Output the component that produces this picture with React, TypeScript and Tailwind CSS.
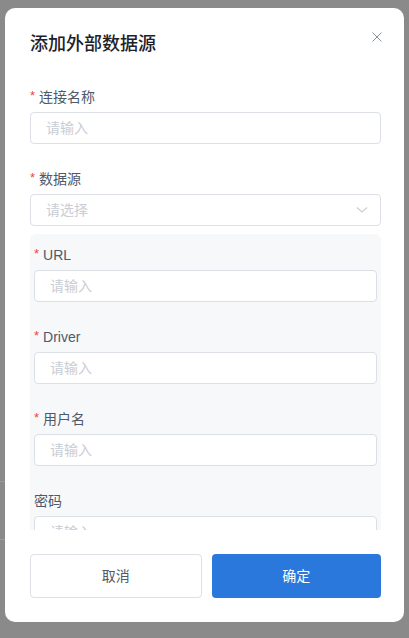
import React from "react";

const font = { fontFamily: '"Liberation Sans", "Noto Sans CJK SC", sans-serif' };

function Label({ text, required = true }: { text: string; required?: boolean }) {
  return (
    <div className="flex items-center h-[22px] mb-[4px] text-[14px] leading-[22px] text-[#4e5969]">
      {required && <span className="text-[#f53f3f] text-[13px] mr-[4px] relative top-[-1px]">*</span>}
      <span>{text}</span>
    </div>
  );
}

function Input({ placeholder = "请输入", select = false }: { placeholder?: string; select?: boolean }) {
  return (
    <div className="h-[32px] bg-white border border-[#dcdfe6] rounded-[4px] flex items-center pl-[15px] pr-[12px] justify-between">
      <span className="text-[14px] text-[#c9cdd4]">{placeholder}</span>
      {select && (
        <svg width="12" height="8" viewBox="0 0 12 8" fill="none">
          <path d="M1 1.5 L6 6 L11 1.5" stroke="#c9cdd4" strokeWidth="1.1" />
        </svg>
      )}
    </div>
  );
}

function Item({ label, required = true, select = false, last = false }: { label: string; required?: boolean; select?: boolean; last?: boolean }) {
  return (
    <div className={last ? "" : "mb-[24px]"}>
      <Label text={label} required={required} />
      <Input placeholder={select ? "请选择" : "请输入"} select={select} />
    </div>
  );
}

export default function App() {
  return (
    <div className="relative w-[409px] h-[638px] bg-[#8a8a8a] overflow-hidden" style={font}>
      <div className="absolute left-0 top-[481px] w-[6px] h-px bg-[#9a9a9a]" />
      <div className="absolute left-0 top-[539px] w-[6px] h-px bg-[#9a9a9a]" />
      <div className="pt-[8px] pl-[5px]">
        <div className="relative w-[399px] h-[614px] bg-white rounded-[10px] flex flex-col">
          <div className="pl-[25px] pr-[23px] pt-[23px]">
            <div className="text-[18px] leading-[26px] font-medium text-[#1d2129]">添加外部数据源</div>
          </div>
          <button className="absolute right-[22px] top-[24px] w-[10px] h-[10px]">
            <svg width="10" height="10" viewBox="0 0 10 10" fill="none">
              <path d="M0.5 0.5 L9.5 9.5 M9.5 0.5 L0.5 9.5" stroke="#86909c" strokeWidth="1" />
            </svg>
          </button>
          <div className="flex-1 overflow-hidden pl-[25px] pr-[23px] pt-[29px]">
            <Item label="连接名称" />
            <div className="mb-[8px]">
              <Label text="数据源" />
              <Input placeholder="请选择" select />
            </div>
            <div className="bg-[#f7f8fa] rounded-[6px] px-[4px] pt-[10px] pb-[8px]">
              <Item label="URL" />
              <Item label="Driver" />
              <Item label="用户名" />
              <Item label="密码" required={false} last />
            </div>
          </div>
          <div className="pl-[25px] pr-[23px] py-[24px] flex gap-[10px]">
            <button className="flex-1 h-[44px] border border-[#dcdfe6] rounded-[4px] bg-white text-[14px] text-[#4e5969]">取消</button>
            <button className="flex-1 h-[44px] rounded-[4px] bg-[#2b78dc] text-[14px] text-white">确定</button>
          </div>
        </div>
      </div>
    </div>
  );
}
